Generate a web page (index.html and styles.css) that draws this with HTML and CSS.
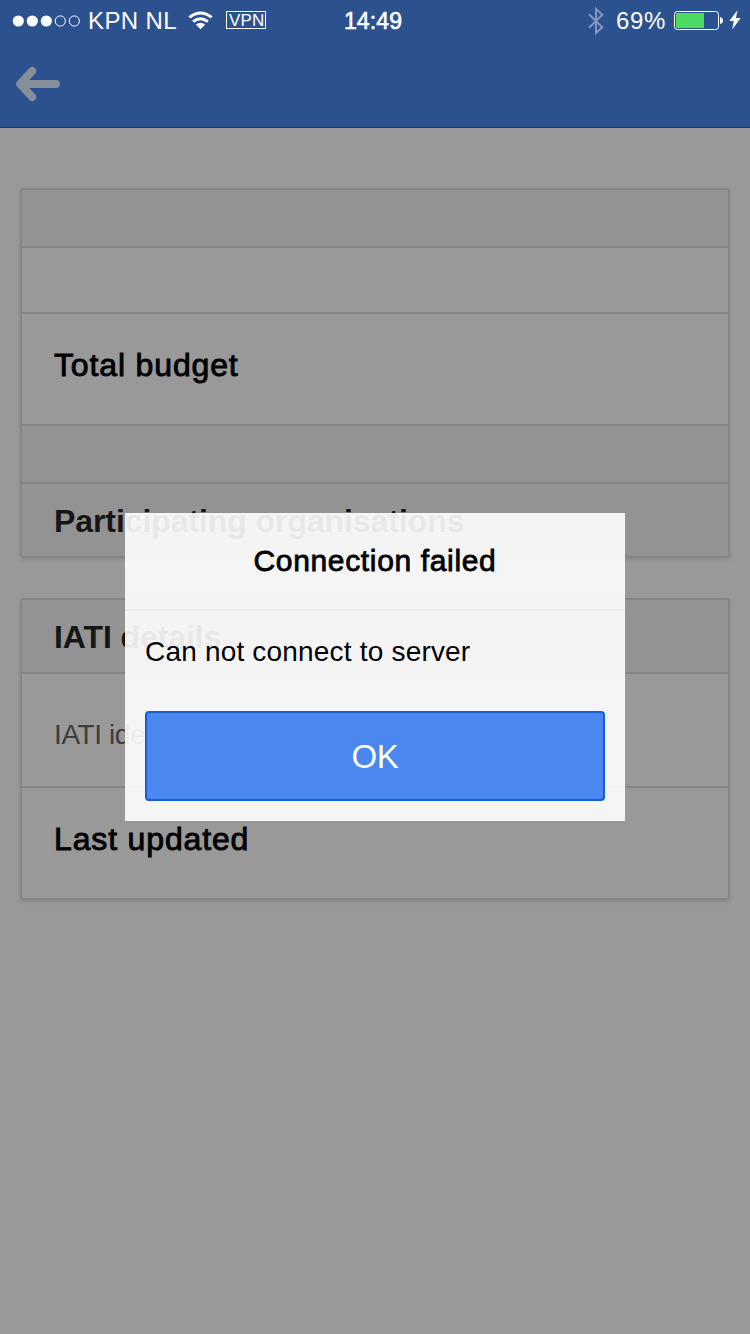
FILE: index.html
```html
<!DOCTYPE html>
<html lang="en">
<head>
<meta charset="utf-8">
<meta name="viewport" content="width=device-width">
<title>Connection failed</title>
<link rel="stylesheet" href="styles.css">
</head>
<body>
<div class="screen">
  <header class="header">
    <div class="status">
      <div class="status-left">
        <svg class="signal" width="70" height="12" viewBox="0 0 70 12">
          <g fill="#fff"><circle cx="6.3" cy="6" r="5.6"/><circle cx="20.3" cy="6" r="5.6"/><circle cx="34.3" cy="6" r="5.6"/></g>
          <g fill="none" stroke="#fff"><circle cx="48.3" cy="6" r="5.1"/><circle cx="62.3" cy="6" r="5.1"/></g>
        </svg>
        <span class="carrier">KPN NL</span>
        <svg class="wifi" width="25" height="19" viewBox="0 0 25 19">
          <g fill="none" stroke="#fff" stroke-width="3"><path d="M1.4 6.4Q12.5-2.4 23.6 6.4"/><path d="M5.1 10.7Q12.5 4.8 19.9 10.7"/></g>
          <path fill="#fff" d="M7.8 13.5Q12.5 9.8 17.2 13.5L12.5 18.3Z"/>
        </svg>
        <span class="vpn">VPN</span>
      </div>
      <span class="clock">14:49</span>
      <div class="status-right">
        <svg class="bluetooth" width="16" height="28" viewBox="0 0 16 28">
          <path fill="none" stroke="#8298bd" stroke-width="2" d="M1 7.2L14.3 20.3L8 26V2L14.3 7.7L1 20.8"/>
        </svg>
        <span class="percent">69%</span>
        <svg class="battery" width="50" height="20" viewBox="0 0 50 20">
          <rect x=".5" y=".5" width="44" height="18" rx="2.8" fill="none" stroke="#fff"/>
          <path fill="#4cd964" d="M3.2 2H30V17H3.2Q2 17 2 15.8V3.2Q2 2 3.2 2Z"/>
          <path fill="#fff" d="M46 6Q49 7 49 9.5T46 13Z"/>
        </svg>
        <svg class="bolt" width="12" height="20" viewBox="0 0 12 20">
          <path fill="#fff" d="M8.4.3L.3 11.1H4.7L3.2 19.5L11.7 8.1H7Z"/>
        </svg>
      </div>
    </div>
    <svg class="back" width="46" height="36" viewBox="0 0 46 36">
      <path fill="none" stroke="#868e98" stroke-width="8" stroke-linecap="round" stroke-linejoin="round" d="M17.1 5L5.2 18L17.1 31M6 18H41"/>
      <path fill="#868e98" d="M5 18L14 12V24Z"/>
    </svg>
  </header>
  <main class="content">
    <section class="card">
      <div class="row bar empty"></div>
      <div class="row blank"></div>
      <div class="row item"><span class="medium budget">Total budget</span></div>
      <div class="row bar empty"></div>
      <div class="row bar title"><span class="bold">Participating organisations</span></div>
    </section>
    <section class="card">
      <div class="row bar title"><span class="bold">IATI details</span></div>
      <div class="row item identifier"><span class="label">IATI identifier</span></div>
      <div class="row item updated"><span class="medium">Last updated</span></div>
    </section>
  </main>
  <div class="overlay">
    <div class="dialog">
      <h3 class="dialog-title">Connection failed</h3>
      <div class="dialog-body"><span class="message">Can not connect to server</span></div>
      <button class="ok">OK</button>
    </div>
  </div>
</div>
</body>
</html>
```
FILE: styles.css
```css
* { box-sizing: border-box; }
body { margin: 0; font-family: "Liberation Sans", Arial, sans-serif; }
.screen { position: relative; width: 750px; height: 1334px; overflow: hidden; background: #999; }
.header { height: 128px; background: #2c518f; border-bottom: 1px solid #0d3880; }
.status { display: grid; grid-template-columns: 1fr 60px 1fr; height: 38px; color: #fff; white-space: nowrap; }
.status-left, .status-right { display: flex; align-items: center; height: 38px; }
.status-left { padding-left: 12px; }
.status-right { justify-content: flex-end; padding-right: 9px; }
.signal { margin-top: 3px; }
.carrier { width: 90px; margin-left: 6px; font-size: 24px; line-height: 38px; letter-spacing: .4px; padding-top: 4px; }
.wifi { margin-left: 10px; margin-top: 2px; }
.vpn { width: 40px; height: 18px; margin-left: 13px; margin-top: 2px; border: 1px solid #fff; font-size: 17px; line-height: 17px; letter-spacing: .2px; padding-left: 2px; }
.clock { position: relative; left: -2px; font-size: 23px; line-height: 42px; text-align: center; letter-spacing: .1px; -webkit-text-stroke: .6px #fff; }
.bluetooth { margin-top: 3px; }
.percent { width: 50px; margin-left: 12px; font-size: 24px; line-height: 40px; letter-spacing: .7px; padding-top: 4px; }
.battery { margin-left: 8px; margin-top: 4px; }
.bolt { margin-left: 5px; margin-top: 2px; }
.back { display: block; margin: 28px 0 0 15px; }
.content { display: flex; flex-direction: column; gap: 40px; padding: 60px 20px 0; }
.card { border: 2px solid #858585; border-radius: 4px; box-shadow: 0 2px 4px rgba(0, 0, 0, .1); }
.row { display: flex; align-items: center; padding-left: 32px; border-bottom: 2px solid #858585; white-space: nowrap; }
.row:last-child { border-bottom: 0; }
.bar { background: #939393; }
.empty { height: 58px; }
.blank { height: 66px; }
.item { height: 112px; align-items: flex-start; padding-top: 32px; line-height: 38px; }
.identifier { height: 114px; padding-top: 42px; }
.updated { height: 110px; }
.title { height: 74px; }
.card:first-child .title { height: 72px; }
.medium { font-size: 32px; letter-spacing: .85px; -webkit-text-stroke: .9px #000; }
.bold { font-size: 32px; font-weight: 700; color: #161616; letter-spacing: -.08px; padding-top: 2px; }
.label { font-size: 28px; letter-spacing: -.4px; color: #3d3d3d; }
.overlay { position: absolute; inset: 0; display: flex; align-items: center; justify-content: center; }
.dialog { width: 500px; height: 308px; background: rgba(255, 255, 255, .9); display: flex; flex-direction: column; }
.dialog-title { margin: 0; height: 98px; border-bottom: 2px solid #eee; text-align: center; font-size: 30px; font-weight: 400; line-height: 95px; letter-spacing: .65px; -webkit-text-stroke: .8px #000; }
.dialog-body { height: 100px; padding: 24px 20px; font-size: 28px; line-height: 34px; letter-spacing: .19px; white-space: nowrap; }
.ok { height: 90px; margin: 0 20px; padding: 2px 0 0; border: 2px solid #145fd7; border-radius: 4px; background: #4a87ee; color: #fff; font: 33px/84px "Liberation Sans", Arial, sans-serif; letter-spacing: -.4px; }
```
